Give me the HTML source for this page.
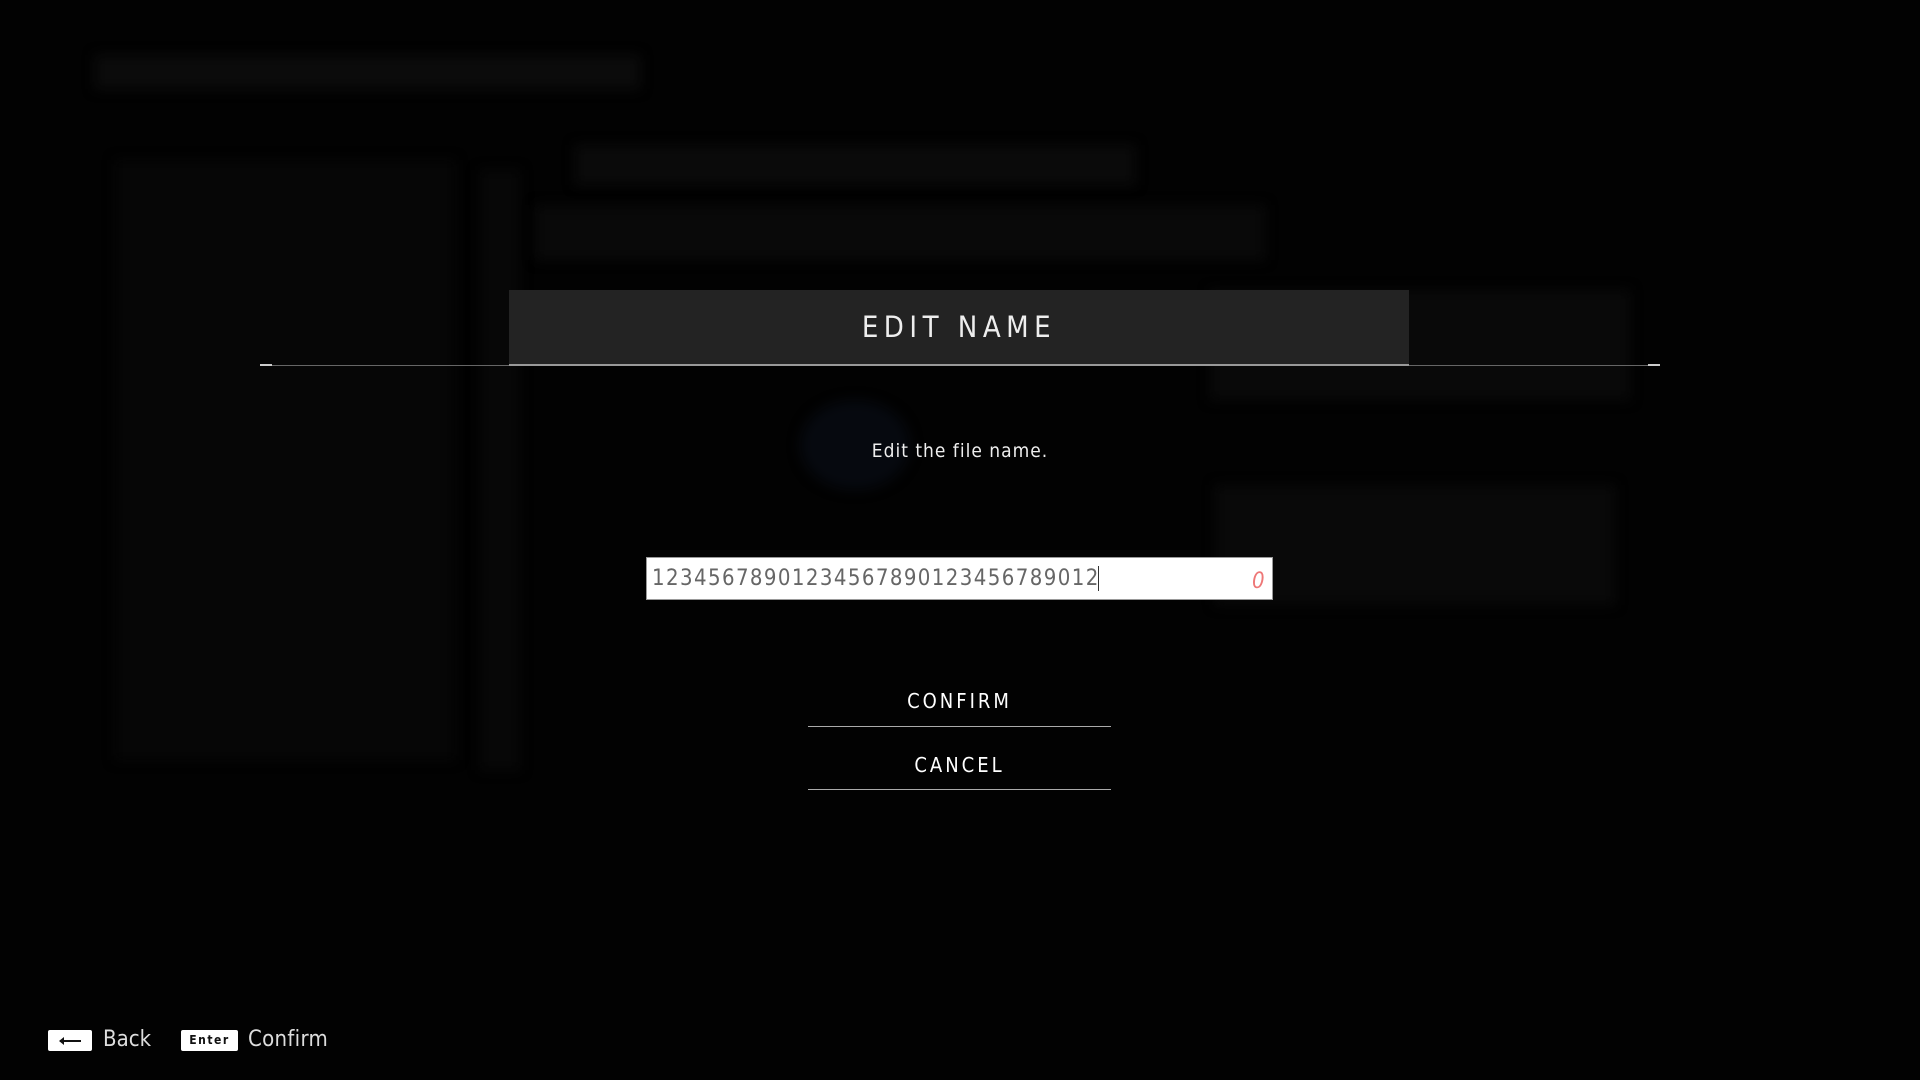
<!DOCTYPE html>
<html><head><meta charset="utf-8"><style>
html,body{margin:0;padding:0;width:1920px;height:1080px;background:#020202;overflow:hidden;font-family:"DejaVu Sans Condensed","Liberation Sans",sans-serif;color:#fff}
.a{position:absolute}
.blur{position:absolute;background:#101010;filter:blur(6px)}
</style></head><body>
<div class="blur" style="left:95px;top:55px;width:545px;height:34px;background:#0b0b0b"></div>
<div class="blur" style="left:115px;top:160px;width:340px;height:600px;background:#060606"></div>
<div class="blur" style="left:480px;top:170px;width:40px;height:600px;background:#070707"></div>
<div class="blur" style="left:575px;top:145px;width:560px;height:40px;background:#0a0a0a"></div>
<div class="blur" style="left:535px;top:205px;width:730px;height:55px;background:#090909"></div>
<div class="blur" style="left:1210px;top:290px;width:420px;height:110px;background:#090909"></div>
<div class="blur" style="left:1215px;top:485px;width:400px;height:120px;background:#090909"></div>
<div class="blur" style="left:800px;top:400px;width:110px;height:90px;background:#06090f;border-radius:50%"></div>

<div class="a" style="left:509px;top:290px;width:900px;height:74px;background:#232323"></div>
<div class="a" style="left:509px;top:290px;width:900px;height:74px;line-height:74px;text-align:center;font-size:29px;letter-spacing:5.5px;color:#eee;font-family:'DejaVu Sans Condensed','Liberation Sans',sans-serif;font-weight:300">EDIT NAME</div>
<div class="a" style="left:260px;top:365px;width:1400px;height:1px;background:#666"></div>
<div class="a" style="left:509px;top:364px;width:900px;height:2px;background:#999"></div>
<div class="a" style="left:260px;top:364px;width:12px;height:2px;background:#ccc"></div>
<div class="a" style="left:1648px;top:364px;width:12px;height:2px;background:#ccc"></div>

<div class="a" style="left:0;top:440px;width:1920px;text-align:center;font-size:19px;letter-spacing:1px;color:#eee">Edit the file name.</div>

<div class="a" style="left:646px;top:557px;width:627px;height:43px;background:#fff;border:1px solid #999;box-sizing:border-box"></div>
<div class="a" style="left:652px;top:566px;font-size:22px;color:#666;letter-spacing:1.4px">1234567890123456789012345678901<span style="border-right:1px solid #333;letter-spacing:0">2</span></div>
<div class="a" style="left:1252px;top:569px;font-size:22px;color:#e77;font-style:italic">0</div>

<div class="a" style="left:808px;top:689px;width:303px;text-align:center;font-size:20px;letter-spacing:3px;color:#fff">CONFIRM</div>
<div class="a" style="left:808px;top:726px;width:303px;height:1px;background:#aaa"></div>
<div class="a" style="left:808px;top:753px;width:303px;text-align:center;font-size:20px;letter-spacing:3px;color:#fff">CANCEL</div>
<div class="a" style="left:808px;top:789px;width:303px;height:1px;background:#aaa"></div>

<div class="a" style="left:48px;top:1030px;width:44px;height:21px;background:#fff;border-radius:2px">
<div class="a" style="left:12px;top:10px;width:21px;height:2px;background:#111"></div>
<div class="a" style="left:11px;top:7px;width:0;height:0;border-top:4px solid transparent;border-bottom:4px solid transparent;border-right:5px solid #111"></div></div>
<div class="a" style="left:103px;top:1027px;font-size:22px;color:#ddd">Back</div>
<div class="a" style="left:181px;top:1030px;width:57px;height:21px;background:#fff;border-radius:2px;color:#111;font-size:12px;line-height:21px;text-align:center;letter-spacing:1.5px;font-weight:bold">Enter</div>
<div class="a" style="left:248px;top:1027px;font-size:22px;color:#ddd;letter-spacing:0.3px">Confirm</div>
</body></html>
